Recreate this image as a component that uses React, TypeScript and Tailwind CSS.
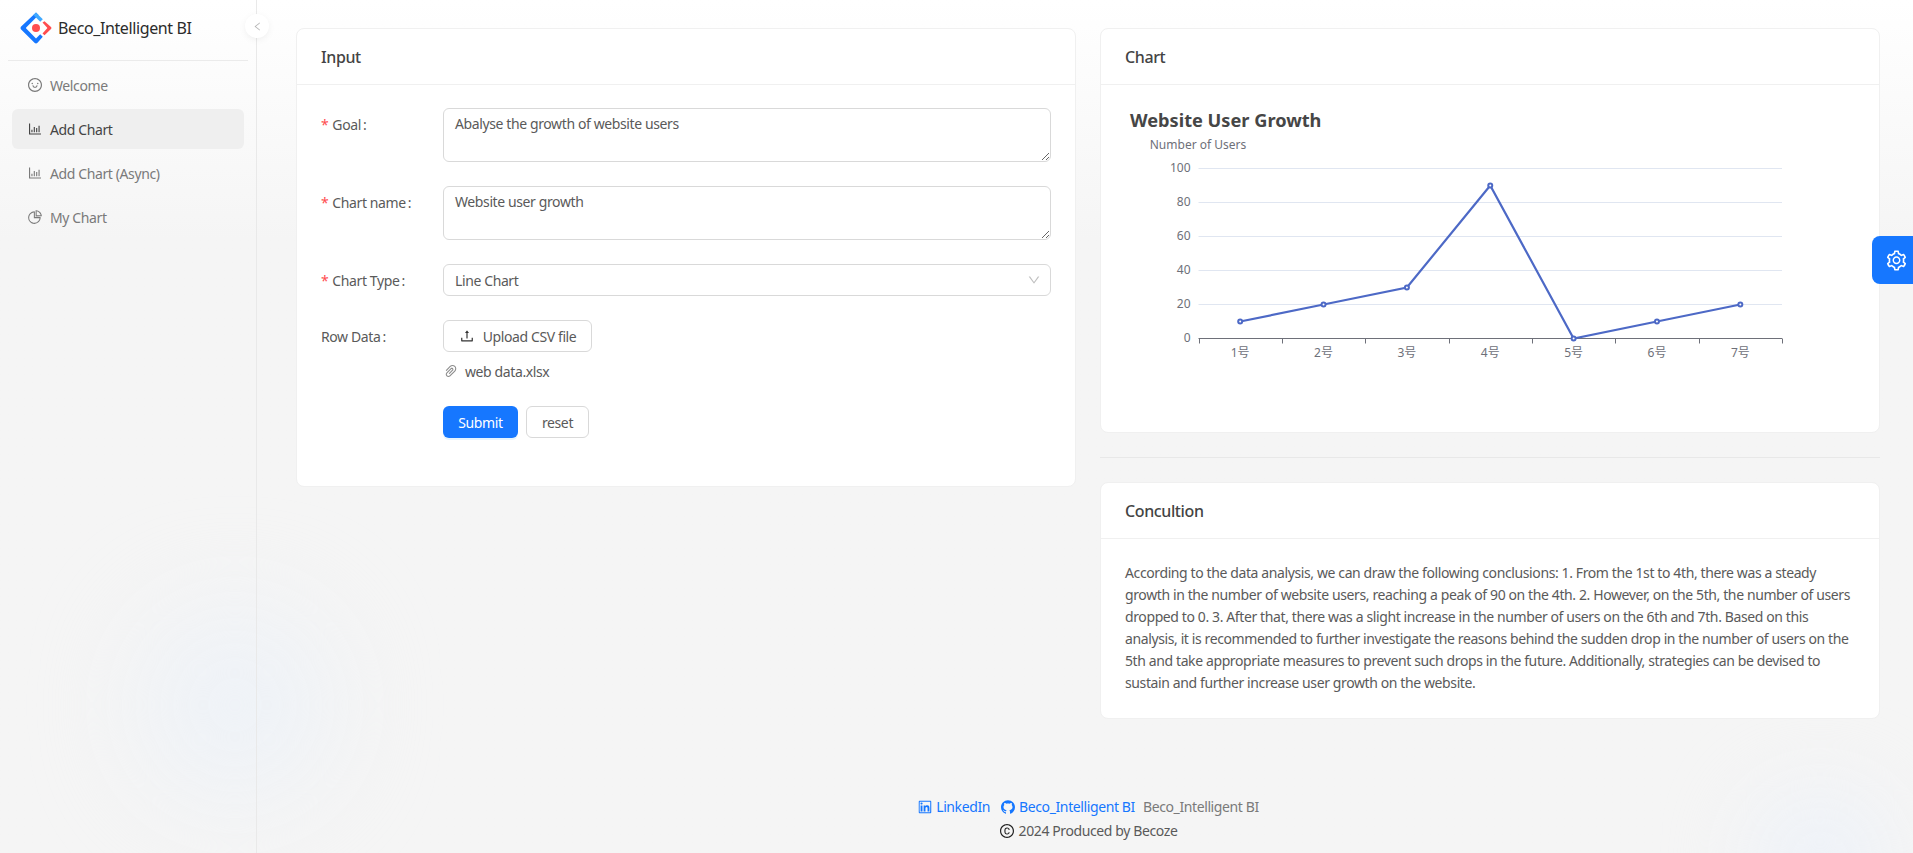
import type { ReactNode } from "react";
import {
  AiOutlineSmile,
  AiOutlineBarChart,
  AiOutlinePieChart,
  AiOutlineUpload,
  AiOutlinePaperClip,
  AiOutlineLinkedin,
  AiFillGithub,
  AiOutlineCopyright,
  AiOutlineSetting,
  AiOutlineLeft,
  AiOutlineDown,
} from "react-icons/ai";

const menu = [
  { label: "Welcome", icon: <AiOutlineSmile size={16} /> },
  { label: "Add Chart", icon: <AiOutlineBarChart size={16} />, active: true },
  { label: "Add Chart (Async)", icon: <AiOutlineBarChart size={16} /> },
  { label: "My Chart", icon: <AiOutlinePieChart size={16} /> },
];

const values = [10, 20, 30, 90, 0, 10, 20];

// chart area, in svg coordinates
const left = 73.5;
const right = 657;
const top = 60.5;
const bottom = 230.5;
const band = (right - left) / 7;

const px = (i: number) => left + band * (i + 0.5);
const py = (v: number) => bottom - ((bottom - top) * v) / 100;

function Logo() {
  return (
    <svg width="32" height="32" viewBox="0 0 32 32" fill="none">
      <path d="M16 0.5 L18.6 3.1 L6.2 15.5 Q5.7 16 6.2 16.5 L16 26.4 L20.2 22.2 L22.8 24.8 L17.5 30.8 Q16 32 14.5 30.8 L0.9 17.3 Q0 16 0.9 14.7 Z" fill="#1677ff" />
      <path d="M16 0.5 L22.8 7.2 L20.2 9.8 L13.4 3.1 Z" fill="#40a9ff" />
      <path d="M22.5 10.6 L24.5 9.2 L31 15 Q32 16 31 17 L24.5 23.2 L22.5 21.4 L27.4 16 Z" fill="#ff4d4f" />
      <ellipse cx="16" cy="16" rx="4" ry="4" fill="#ff4d4f" />
    </svg>
  );
}

function Card({ title, children }: { title: string; children: ReactNode }) {
  return (
    <div className="bg-white rounded-lg border border-[#f0f0f0]">
      <div className="h-[56px] px-6 flex items-center text-[16px] font-medium text-[#444] border-b border-[#f0f0f0]">
        {title}
      </div>
      {children}
    </div>
  );
}

function Field({ label, required, children }: { label: string; required?: boolean; children: ReactNode }) {
  return (
    <div className="flex mb-6">
      <div className="w-[122px] h-8 flex items-center text-[#5a5a5a] shrink-0">
        {required && <span className="text-[#ff4d4f] mr-[4px] text-[14px]">*</span>}
        <span>{label}</span>
        <span className="ml-[2px] mr-2">:</span>
      </div>
      <div className="flex-1">{children}</div>
    </div>
  );
}

function LineChart() {
  const ticks = [0, 20, 40, 60, 80, 100];
  return (
    <svg width="730" height="300" viewBox="0 0 730 300" className="tracking-normal">
      <text x="5" y="18" dy="1" fontSize="18.2" fontWeight="700" fill="#464646">
        Website User Growth
      </text>
      <text x="73" y="41" fontSize="12" fill="#6e7079" textAnchor="middle">
        Number of Users
      </text>
      {ticks.map(t => (
        <g key={t}>
          {t > 0 && <line x1={left} x2={right} y1={py(t)} y2={py(t)} stroke="#e0e6f1" />}
          <text x={left - 8} y={py(t) + 3} fontSize="12" fill="#6e7079" textAnchor="end">
            {t}
          </text>
        </g>
      ))}
      <line x1={left} x2={right} y1={bottom} y2={bottom} stroke="#6e7079" />
      {Array.from({ length: 8 }).map((_, i) => (
        <line
          key={i}
          x1={Math.round(left + band * i) + 0.5}
          x2={Math.round(left + band * i) + 0.5}
          y1={bottom}
          y2={bottom + 5}
          stroke="#6e7079"
        />
      ))}
      {values.map((_, i) => (
        <text key={i} x={px(i)} y={bottom + 18} fontSize="12" fill="#6e7079" textAnchor="middle">
          {i + 1}号
        </text>
      ))}
      <polyline
        points={values.map((v, i) => `${px(i)},${py(v)}`).join(" ")}
        fill="none"
        stroke="#4d69c6"
        strokeWidth="2.2"
      />
      {values.map((v, i) => (
        <circle key={i} cx={px(i)} cy={py(v)} r="2" fill="#fff" stroke="#4d69c6" strokeWidth="2" />
      ))}
    </svg>
  );
}

export default function App() {
  return (
    <div
      className="relative min-h-screen flex overflow-hidden text-[14px] tracking-[-0.39px] bg-gradient-to-b from-white to-[#f5f5f5] to-[240px]"
      style={{ fontFamily: '"Noto Sans", "Noto Sans CJK SC", sans-serif' }}
    >
      {/* soft background blobs */}
      <div className="absolute left-[140px] top-[610px] w-[190px] h-[190px] rounded-full bg-[#eef2f7] blur-[50px]" />
      <div className="absolute left-[1750px] top-[790px] w-[140px] h-[140px] rounded-full bg-[#eef2f8] blur-[40px]" />

      <aside className="relative w-[257px] shrink-0 border-r border-[#e9e9e9]">
        <div className="h-[61px] mx-2 flex items-center gap-[6px] pl-3 pb-[4px] border-b border-[#ebebeb]">
          <Logo />
          <span className="text-[16px] text-[#2b2b2b]">Beco_Intelligent BI</span>
        </div>
        <nav className="px-3 pt-1">
          {menu.map(item => (
            <div
              key={item.label}
              className={`h-10 mb-1 rounded-md flex items-center gap-[7px] pl-[15px] ${
                item.active ? "bg-[#efefef] text-[#444]" : "text-[#7a7a7a]"
              }`}
            >
              {item.icon}
              <span>{item.label}</span>
            </div>
          ))}
        </nav>
        <div className="absolute left-[245px] top-[14px] w-6 h-6 rounded-full bg-white shadow-[0_2px_8px_-2px_rgba(0,0,0,0.1)] flex items-center justify-center text-[#b5b5b5]">
          <AiOutlineLeft size={11} />
        </div>
      </aside>

      <main className="relative flex-1 flex flex-col pl-[39px] pr-[33px] pt-[28px] pb-[11px]">
        <div className="flex gap-6 items-start">
          <div className="w-[780px]">
            <Card title="Input">
              <div className="pt-[23px] pb-6 px-6">
                <Field label="Goal" required>
                  <textarea
                    defaultValue="Abalyse the growth of website users"
                    className="block w-full h-[54px] rounded-md border border-[#d9d9d9] px-[11px] py-1 leading-[22px] text-[#5a5a5a]"
                  />
                </Field>
                <Field label="Chart name" required>
                  <textarea
                    defaultValue="Website user growth"
                    className="block w-full h-[54px] rounded-md border border-[#d9d9d9] px-[11px] py-1 leading-[22px] text-[#5a5a5a]"
                  />
                </Field>
                <Field label="Chart Type" required>
                  <div className="h-8 rounded-md border border-[#d9d9d9] pl-[11px] pr-[9px] flex items-center justify-between text-[#5a5a5a]">
                    <span>Line Chart</span>
                    <AiOutlineDown size={14} className="text-[#bfbfbf]" />
                  </div>
                </Field>
                <Field label="Row Data">
                  <div className="h-8 w-[149px] rounded-md border border-[#d9d9d9] flex items-center justify-center gap-2 text-[#5a5a5a]">
                    <AiOutlineUpload size={16} className="text-[#333]" />
                    <span>Upload CSV file</span>
                  </div>
                  <div className="mt-2 h-[22px] flex items-center gap-[6px] text-[#5a5a5a]">
                    <AiOutlinePaperClip size={16} className="text-[#8c8c8c]" />
                    <span>web data.xlsx</span>
                  </div>
                </Field>
                <div className="flex gap-2 ml-[122px]">
                  <div className="h-8 w-[75px] rounded-md bg-[#1677ff] text-white flex items-center justify-center shadow-[0_2px_0_rgba(5,145,255,0.1)]">
                    Submit
                  </div>
                  <div className="h-8 w-[63px] rounded-md border border-[#d9d9d9] text-[#5a5a5a] flex items-center justify-center">
                    reset
                  </div>
                </div>
                <div className="h-6" />
              </div>
            </Card>
          </div>

          <div className="w-[780px]">
            <Card title="Chart">
              <div className="pt-[23px] pb-6 px-6">
                <LineChart />
              </div>
            </Card>
            <div className="my-6 border-t border-[#e8e8e8]" />
            <Card title="Concultion">
              <div className="pt-[23px] pb-6 px-6 leading-[22px] text-[#5a5a5a]">
                According to the data analysis, we can draw the following conclusions: 1. From the 1st to 4th, there was a steady growth in the number of website users, reaching a peak of 90 on the 4th. 2. However, on the 5th, the number of users dropped to 0. 3. After that, there was a slight increase in the number of users on the 6th and 7th. Based on this analysis, it is recommended to further investigate the reasons behind the sudden drop in the number of users on the 5th and take appropriate measures to prevent such drops in the future. Additionally, strategies can be devised to sustain and further increase user growth on the website.
              </div>
            </Card>
          </div>
        </div>

        <footer className="mt-auto text-center leading-[22px]">
          <div className="flex items-center justify-center">
            <span className="flex items-center gap-[3px] text-[#1677ff]">
              <AiOutlineLinkedin size={16} />
              LinkedIn
            </span>
            <span className="ml-[10px] flex items-center gap-[3px] text-[#1677ff]">
              <AiFillGithub size={16} />
              Beco_Intelligent BI
            </span>
            <span className="ml-2 text-[#7a7a7a]">Beco_Intelligent BI</span>
          </div>
          <div className="flex items-center justify-center gap-[4px] text-[#5a5a5a] mt-[2px]">
            <AiOutlineCopyright size={16} className="text-[#222]" />
            <span>2024 Produced by Becoze</span>
          </div>
        </footer>
      </main>

      <div className="absolute right-0 top-[236px] w-[41px] h-12 pl-[7px] rounded-l-lg bg-[#1677ff] text-white flex items-center justify-center">
        <AiOutlineSetting size={23} />
      </div>
    </div>
  );
}
